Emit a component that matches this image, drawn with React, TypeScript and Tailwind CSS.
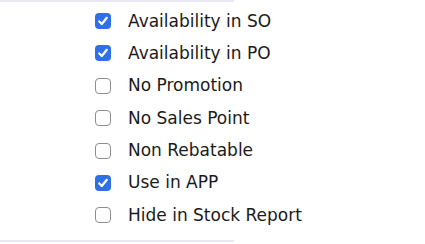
import React from "react";

const items: { label: string; checked: boolean }[] = [
  { label: "Availability in SO", checked: true },
  { label: "Availability in PO", checked: true },
  { label: "No Promotion", checked: false },
  { label: "No Sales Point", checked: false },
  { label: "Non Rebatable", checked: false },
  { label: "Use in APP", checked: true },
  { label: "Hide in Stock Report", checked: false },
];

function Box({ checked }: { checked: boolean }) {
  if (checked) {
    return (
      <span className="flex h-[16px] w-[16px] shrink-0 items-center justify-center rounded-[4px] bg-[#2f6fe8]">
        <svg width="12" height="12" viewBox="0 0 12 12" fill="none">
          <path d="M2.3 6.4 L4.8 9 L9.8 2.8" stroke="white" strokeWidth="2.2" strokeLinecap="round" strokeLinejoin="round" />
        </svg>
      </span>
    );
  }
  return <span className="h-[16px] w-[16px] shrink-0 rounded-[4px] border border-[#8e8e8e] bg-white" />;
}

export default function App() {
  return (
    <div className="h-[244px] w-[425px] bg-white" style={{ fontFamily: '"DejaVu Sans", Verdana, sans-serif' }}>
      <div className="h-[2px] w-[234px] bg-[#e8e8f6]" />
      <div className="flex flex-col gap-[16.4px] pl-[95px] pt-[11px]">
        {items.map((it) => (
          <div key={it.label} className="flex h-[16px] items-center gap-[17px]">
            <Box checked={it.checked} />
            <span className="text-[17px] leading-none text-[#1a1a1a]">{it.label}</span>
          </div>
        ))}
      </div>
      <div className="mt-[17px] h-[2px] w-[234px] bg-[#e8e8f6]" />
    </div>
  );
}
